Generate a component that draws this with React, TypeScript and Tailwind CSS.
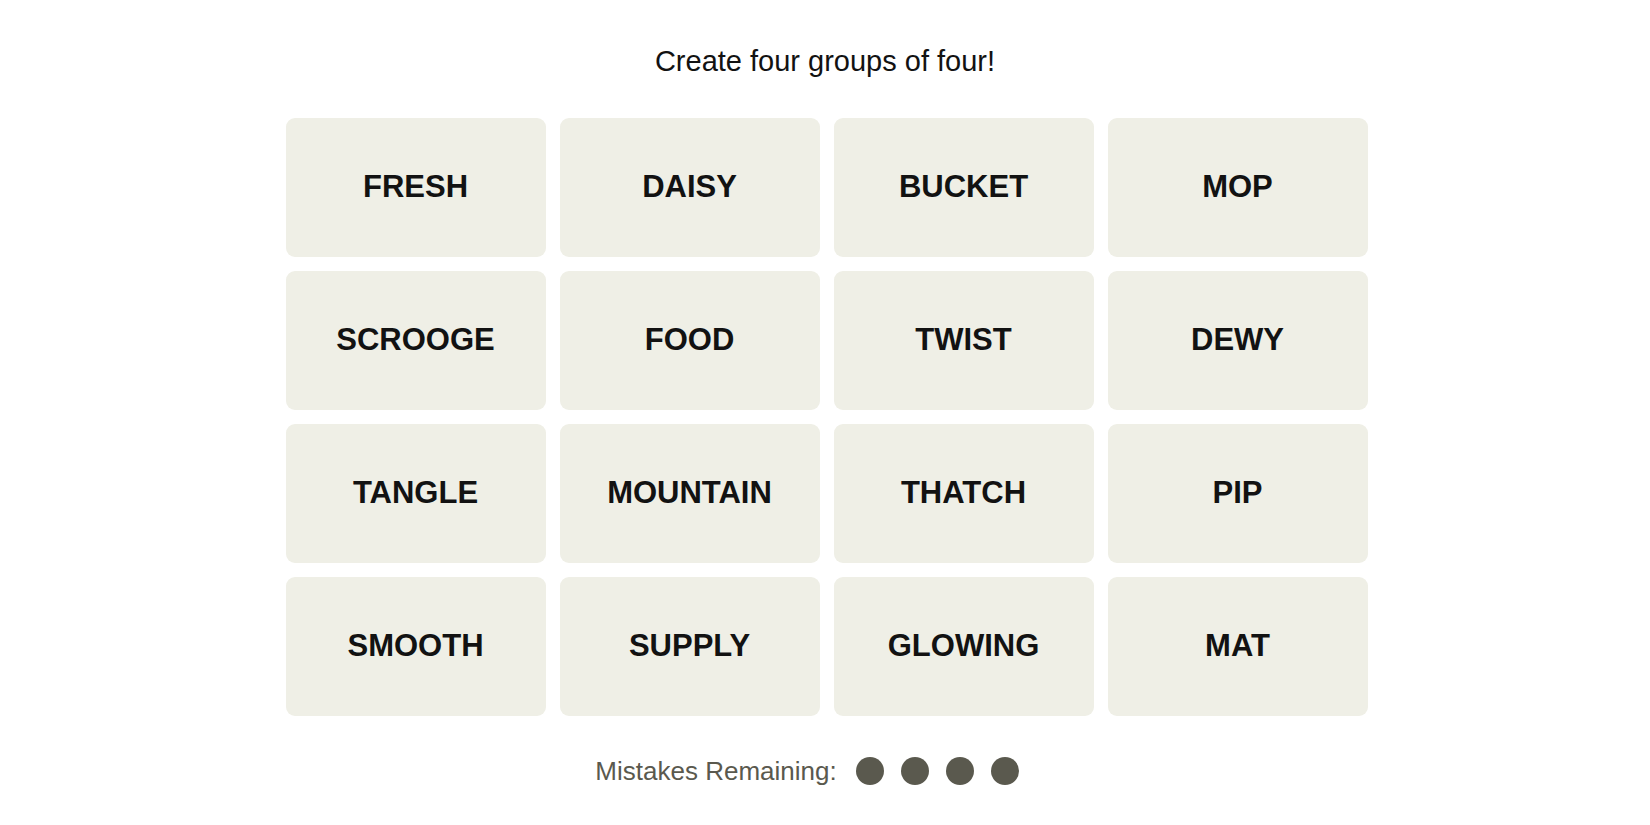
const words = [
  "FRESH", "DAISY", "BUCKET", "MOP",
  "SCROOGE", "FOOD", "TWIST", "DEWY",
  "TANGLE", "MOUNTAIN", "THATCH", "PIP",
  "SMOOTH", "SUPPLY", "GLOWING", "MAT",
];

function Tile({ word }: { word: string }) {
  return (
    <button className="h-[139px] w-[260px] rounded-[9px] bg-[#efefe6] flex items-center justify-center text-[31px] font-bold text-[#121212] uppercase">
      {word}
    </button>
  );
}

export default function App() {
  return (
    <div
      className="min-h-screen bg-white flex flex-col items-center pt-[43px]"
      style={{ fontFamily: '"Liberation Sans", Arial, sans-serif' }}
    >
      <p className="text-[29px] leading-[36px] text-[#121212]">Create four groups of four!</p>

      <div className="mt-[39px] ml-[3px] grid grid-cols-[repeat(4,260px)] gap-[14px]">
        {words.map((w) => (
          <Tile key={w} word={w} />
        ))}
      </div>

      <div className="mt-[41px] flex items-center gap-[19px] mr-[36px]">
        <span className="text-[26px] leading-[28px] text-[#5a594e]">Mistakes Remaining:</span>
        <div className="flex items-center gap-[17px]">
          {[0, 1, 2, 3].map((i) => (
            <span key={i} className="h-[28px] w-[28px] rounded-full bg-[#5a594e]" />
          ))}
        </div>
      </div>
    </div>
  );
}
